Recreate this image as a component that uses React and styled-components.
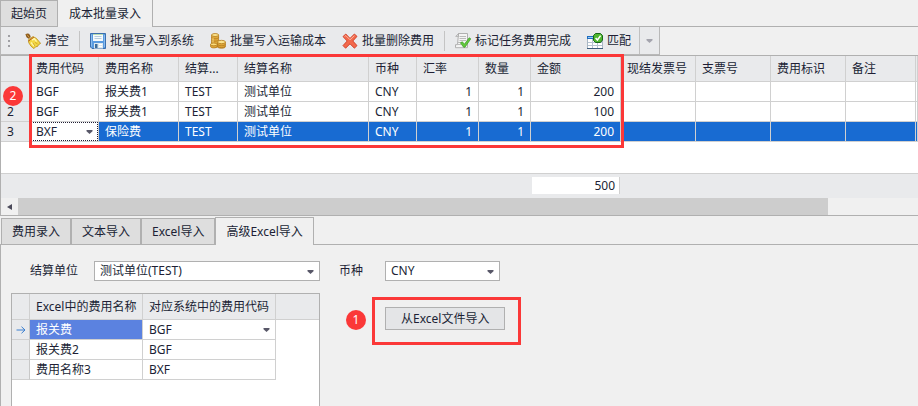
import React, {useState} from 'react'
import styled, {createGlobalStyle} from 'styled-components'

const GlobalStyle = createGlobalStyle`
  * {
    box-sizing: border-box;
  }
  body {
    margin: 0;
    background: #f0f0f0;
    color: #201f35;
    font-family: 'Noto Sans', 'Noto Sans CJK SC', sans-serif;
    font-size: 12px;
    line-height: 18px;
  }
  button,
  select {
    margin: 0;
    color: inherit;
    font: inherit;
  }
`

const Page = styled.main`
  display: flex;
  flex-direction: column;
  height: 100vh;
  overflow: hidden;
`

// tabs
const TopTabs = styled.div`
  display: flex;
  height: 27px;
  border-bottom: 1px solid #b0b0b0;
`
const TopTab = styled.button`
  padding: 0 11px;
  border: 0;
  border-right: 1px solid #b0b0b0;
  background: #f0f0f0;
  white-space: nowrap;
  ${props =>
    props.$active
      ? 'margin-bottom: -1px;'
      : `
    padding: 0 10px;
    border-left: 1px solid #b0b0b0;
    border-top: 1px solid #b0b0b0;
    background: #dedede;
  `}
`
const BottomTabs = styled.div`
  display: flex;
  align-items: flex-end;
  height: 29px;
  padding-left: 1px;
  border-bottom: 1px solid #b0b0b0;
`
const BottomTab = styled.button`
  height: ${props => (props.$active ? '28px' : '26px')};
  margin-bottom: ${props => (props.$active ? '-1px' : '0')};
  padding: 0 10px;
  border: 1px solid #b0b0b0;
  border-bottom: 0;
  background: ${props => (props.$active ? '#f0f0f0' : '#dedede')};
  white-space: nowrap;
`

// toolbar
const Toolbar = styled.div`
  display: flex;
  align-self: flex-start;
  height: 28px;
  border: 1px solid #b8b8b8;
  border-top: 0;
  background: #e9eaec;
`
const Grip = styled.span`
  display: flex;
  flex-direction: column;
  justify-content: center;
  gap: 3px;
  width: 16px;
  padding-left: 7px;
  &::before,
  &::after {
    content: '';
  }
  &::before,
  &::after,
  i {
    width: 2px;
    height: 2px;
    background: #a0a0a4;
  }
`
const ToolButton = styled.button`
  display: flex;
  align-items: center;
  gap: 4px;
  padding: 0 8px;
  border: 0;
  background: transparent;
  white-space: nowrap;
`
const Separator = styled.span`
  width: 1px;
  margin: 4px 2px 3px;
  background: #c4c4c4;
`
const MoreButton = styled.button`
  display: flex;
  align-items: center;
  justify-content: center;
  width: 20px;
  padding: 0;
  border: 0;
  border-left: 1px solid #c0c0c0;
  background: transparent;
  color: #8c8c98;
`

// tables
const GridArea = styled.section`
  position: relative;
  border-top: 1px solid #b0b0b0;
  border-left: 1px solid #b0b0b0;
  border-bottom: 1px solid #b0b0b0;
  background: #fff;
`
const Table = styled.table`
  width: 100%;
  table-layout: fixed;
  border-collapse: separate;
  border-spacing: 0;
`
const Th = styled.th`
  height: 26px;
  padding: 0 0 0 6px;
  border-right: ${props => (props.$last ? '0' : '1px solid #d0d0d0')};
  border-bottom: 1px solid #d0d0d0;
  background: #e9eaec;
  font-weight: 400;
  text-align: left;
  white-space: nowrap;
`
const Td = styled.td`
  height: 20px;
  padding: ${props => (props.$flush ? '0' : '0 6px')};
  border-right: 1px solid #d0d0d0;
  border-bottom: 1px solid #d0d0d0;
  background: ${props => props.$bg || '#fff'};
  color: ${props => (props.$bg ? '#fff' : 'inherit')};
  text-align: ${props => (props.$right ? 'right' : 'left')};
  white-space: nowrap;
`
const RowHead = styled.th`
  height: 20px;
  padding: ${props => (props.$icon ? '0' : '0 0 0 6px')};
  border-right: 1px solid #c8c8c8;
  border-bottom: 1px solid #d0d0d0;
  background: #e9eaec;
  font-weight: 400;
  text-align: left;
  svg {
    display: block;
    margin: auto;
  }
`
const Blank = styled.div`
  height: 31px;
`
const Summary = styled.div`
  border-top: 1px solid #d0d0d0;
  background: #e9eaec;
`
const SummaryCell = styled.td`
  height: 24px;
  padding: 0;
`
const Total = styled.div`
  height: 17px;
  margin: 0 1px 1px;
  padding-right: 4px;
  border-right: 1px solid #d0d0d0;
  background: #fff;
  line-height: 17px;
  text-align: right;
`

// scrollbar
const ScrollBar = styled.div`
  display: flex;
  height: 17px;
  background: #f0f0f0;
`
const ScrollArrow = styled.button`
  display: flex;
  flex: none;
  align-items: center;
  justify-content: center;
  width: 17px;
  padding: 0;
  border: 0;
  background: transparent;
`
const ScrollTrack = styled.div`
  flex: 1;
`
const ScrollThumb = styled.div`
  width: 90%;
  height: 100%;
  background: #cdcdcd;
`

// drop-downs
const SelectBox = styled.div`
  position: relative;
  flex: none;
  width: ${props => props.$width || '100%'};
  height: ${props => (props.$cell ? '19px' : '20px')};
  border: ${props => (props.$cell ? '0' : '1px solid #b0b0b0')};
  outline: ${props => (props.$focus ? '1px dotted #201f35' : '0')};
  outline-offset: -1px;
  background: #fff;
  color: #201f35;
  svg {
    position: absolute;
    top: 8px;
    right: 5px;
    pointer-events: none;
  }
`
const NativeSelect = styled.select`
  display: block;
  width: 100%;
  height: 100%;
  padding: 0 18px 0 ${props => (props.$cell ? '6px' : '5px')};
  border: 0;
  outline: 0;
  appearance: none;
  background: transparent;
  line-height: 18px;
`

// import panel
const Panel = styled.section`
  display: flex;
  flex: 1;
  min-height: 0;
  padding: 16px 0 0 10px;
  border-left: 1px solid #b0b0b0;
`
const Mapping = styled.div`
  display: flex;
  flex: none;
  flex-direction: column;
  gap: 12px;
  width: 309px;
`
const Field = styled.div`
  display: flex;
  align-items: center;
  height: 20px;
  padding-left: 19px;
`
const Label = styled.label`
  width: ${props => props.$width};
`
const MappingGrid = styled.div`
  flex: 1;
  border: 1px solid #b0b0b0;
  border-bottom: 0;
  background: #fff;
`
const ImportSide = styled.div`
  display: flex;
  flex-direction: column;
  gap: 26px;
`
const ImportAction = styled.div`
  position: relative;
  align-self: flex-start;
  margin-left: 65px;
`
const ImportButton = styled.button`
  display: block;
  height: 23px;
  padding: 0 15px;
  border: 1px solid #b0b0b0;
  background: #e4e5e7;
  line-height: 20px;
  white-space: nowrap;
`

// step highlights lying over the page
const Highlight = styled.div`
  position: absolute;
  top: ${props => props.$top};
  left: ${props => props.$left};
  width: ${props => props.$width};
  height: ${props => props.$height};
  border: 3px solid #fb3838;
  pointer-events: none;
`
const Step = styled.span`
  position: absolute;
  top: ${props => props.$top};
  left: ${props => props.$left};
  width: 20px;
  height: 20px;
  border-radius: 50%;
  background: #fb3838;
  color: #fff;
  line-height: 20px;
  text-align: center;
`

const Caret = () => (
  <svg width="7" height="4" viewBox="0 0 7 4">
    <path d="M0.5 0h6v1.2L3.5 4 0.5 1.2z" fill="currentColor" opacity="0.75" />
  </svg>
)

const BroomIcon = () => (
  <svg width="16" height="16" viewBox="0 0 16 16">
    <path d="M0.4 1.2 2.2 0.4 4 0.8 5.6 3 5.3 5 3.5 5.8 1.5 4.2z" fill="#8a5a1c" />
    <path d="M2 1.6 4.4 4.6" stroke="#d49a45" strokeWidth="1" />
    <path
      d="M3.4 6.8 8 3.6 11.4 5.4 15.6 10.4 13.4 11.8 12.6 13.4 10.6 13.8 9 15.6 6 13.2 3.8 9.8z"
      fill="#f3d743"
      stroke="#b98b16"
      strokeWidth="0.8"
    />
    <path d="M7 7 9.4 5.8 11.6 8.6M6 9.6 9 13" stroke="#fff6a8" strokeWidth="1.5" fill="none" />
    <path d="M3.6 8 8.8 4.2" stroke="#b3562b" strokeWidth="1" />
    <path d="M10 9.4 12.6 11M8 10 9.8 13" stroke="#c49a20" strokeWidth="0.7" />
  </svg>
)

const SaveIcon = () => (
  <svg width="16" height="16" viewBox="0 0 16 16">
    <path d="M0.5 0.5h15v15H2L0.5 14z" fill="#5a9be0" stroke="#3b6fae" />
    <path d="M1.5 1.5v12M14.5 2v12" stroke="#8bbdf0" />
    <rect x="3" y="1" width="10" height="7" fill="#f5fafc" />
    <path d="M3 1.5h10" stroke="#b9dcb0" />
    <path d="M4.5 3.5h7M4.5 5.5h7" stroke="#b7cddd" />
    <rect x="4" y="10" width="9" height="5.5" fill="#dfe9ee" />
    <rect x="5" y="11" width="2.5" height="4" fill="#3b6b9b" />
    <path d="M9 11.5h3M9 13.5h3" stroke="#fff" />
  </svg>
)

const CoinsIcon = () => (
  <svg width="16" height="16" viewBox="0 0 16 16" stroke="#b47b1c" strokeWidth="0.8">
    <path d="M1.6 2v10.6c0 2.6 7 2.6 7 0V2z" fill="#e0a83a" />
    <path d="M1.6 4.4c0 1.8 7 1.8 7 0M1.6 6.8c0 1.8 7 1.8 7 0M1.6 9.2c0 1.8 7 1.8 7 0" fill="none" />
    <ellipse cx="5.1" cy="2" rx="3.5" ry="1.5" fill="#fbe38c" />
    <path d="M3 5v7" stroke="#fbe08a" />
    <path d="M0.6 11.4v2c0 2 6.4 2 6.4 0v-2z" fill="#e0a83a" />
    <ellipse cx="3.8" cy="11.4" rx="3.2" ry="1.4" fill="#fbdc7c" />
    <path d="M7.6 9v4.6c0 2.2 7.8 2.2 7.8 0V9z" fill="#e0a83a" />
    <path d="M7.6 11.2c0 2 7.8 2 7.8 0M7.6 13c0 2 7.8 2 7.8 0" fill="none" />
    <ellipse cx="11.5" cy="9" rx="3.9" ry="1.7" fill="#fbe38c" />
  </svg>
)

const DeleteIcon = () => (
  <svg width="16" height="16" viewBox="0 0 16 16">
    <path
      d="M1 3.6 3.8 1 8 5.4 12.4 1 15 3.4 10.8 8 15 12.6 12.4 15.2 8 10.8 3.6 15.2 1 12.6 5.2 8z"
      fill="#f2694c"
      stroke="#cf3a22"
      strokeWidth="0.9"
    />
    <path d="M2.6 3.4 3.8 2.6 8 6.8 12.4 2.6" stroke="#ffb39b" fill="none" />
  </svg>
)

const MarkIcon = () => (
  <svg width="16" height="16" viewBox="0 0 16 16">
    <path d="M3.5 0.5h9v14.2h-12v-3h2z" fill="#f4f4f4" stroke="#b0b0b0" />
    <path d="M3.5 0.5 0.7 3.4h2.8z" fill="#ddd" stroke="#a3a3a3" strokeWidth="0.7" />
    <path d="M4.5 3.5h6.5M4.5 5.5h6.5M4.5 7.5h6.5M2 9.5h5M2 11.5h4" stroke="#bbb" />
    <path
      d="M5.4 9.8 7.4 8.8 9.4 11.2 14.2 4.8 15.8 5.8 10 14.2 8.6 14.2z"
      fill="#62c93c"
      stroke="#3a9a22"
      strokeWidth="0.7"
    />
  </svg>
)

const MatchIcon = () => (
  <svg width="16" height="16" viewBox="0 0 16 16">
    <rect x="0.5" y="3.5" width="15" height="12" fill="#fff" stroke="#a9b7c4" />
    <path d="M0 3h8v3H0z" fill="#1c6cc0" />
    <path d="M1 4h5v1H1z" fill="#9ccaf1" />
    <path d="M1 9.5h14M1 12.5h14M5.5 6v9M10.5 9v6" stroke="#b6c3d0" />
    <path d="M0 15.5h16" stroke="#3d5c7c" />
    <path d="M8.5 0.5h5L15.5 2.5v4.5L13.5 9.5h-5L6.5 7.5v-5z" fill="#50b72f" stroke="#17661a" />
    <path d="M8.6 5 10.4 7 13.6 2.6" fill="none" stroke="#fff" strokeWidth="1.5" />
  </svg>
)

const RowArrow = () => (
  <svg width="10" height="8" viewBox="0 0 10 8" fill="none" stroke="#3b7fd0">
    <path d="M0.5 4H9M5.5 0.7 9 4 5.5 7.3" />
  </svg>
)

const Dropdown = ({id, label, options, width, cell, focus}) => (
  <SelectBox $width={width} $cell={cell} $focus={focus}>
    <NativeSelect id={id} aria-label={label} $cell={cell}>
      {options.map(option => <option key={option}>{option}</option>)}
    </NativeSelect>
    <Caret />
  </SelectBox>
)

const costColumns = [
  {title: '费用代码', key: 'code', width: 69},
  {title: '费用名称', key: 'name', width: 80},
  {title: '结算...', key: 'unitCode', width: 59},
  {title: '结算名称', key: 'unitName', width: 131},
  {title: '币种', key: 'currency', width: 48},
  {title: '汇率', key: 'rate', width: 62, right: true},
  {title: '数量', key: 'count', width: 52, right: true},
  {title: '金额', key: 'amount', width: 90, right: true},
  {title: '现结发票号', key: 'invoice', width: 75},
  {title: '支票号', key: 'cheque', width: 75},
  {title: '费用标识', key: 'mark', width: 75},
  {title: '备注', key: 'remark', width: 70},
  {title: '', key: 'rest'}
]

const unit = {unitCode: 'TEST', unitName: '测试单位', currency: 'CNY', rate: 1, count: 1}
const costs = [
  {...unit, code: 'BGF', name: '报关费1', amount: 200},
  {...unit, code: 'BGF', name: '报关费1', amount: 100},
  {...unit, code: 'BXF', name: '保险费', amount: 200}
]
const total = costs.reduce((sum, row) => sum + row.amount, 0)

const mappings = [
  {name: '报关费', code: 'BGF'},
  {name: '报关费2', code: 'BGF'},
  {name: '费用名称3', code: 'BXF'}
]

const CostCols = () => (
  <colgroup>
    <col width="29" />
    {costColumns.map(column => <col key={column.key} width={column.width} />)}
  </colgroup>
)

const CostGrid = () => {
  const selected = costs.length - 1
  return (
    <GridArea>
      <Table>
        <CostCols />
        <thead>
          <tr>
            <Th />
            {costColumns.map(column => <Th key={column.key}>{column.title}</Th>)}
          </tr>
        </thead>
        <tbody>
          {costs.map((row, index) => (
            <tr key={index}>
              {/* the first number sits under the step badge */}
              <RowHead>{index > 0 && index + 1}</RowHead>
              {costColumns.map(column => {
                if (index === selected && column.key === 'code') {
                  return (
                    <Td key={column.key} $flush>
                      <Dropdown label="费用代码" options={['BXF', 'BGF']} cell focus />
                    </Td>
                  )
                }
                return (
                  <Td
                    key={column.key}
                    $right={column.right}
                    $bg={index === selected ? '#186bd2' : undefined}
                  >
                    {row[column.key]}
                  </Td>
                )
              })}
            </tr>
          ))}
        </tbody>
      </Table>
      <Blank />
      <Summary>
        <Table>
          <CostCols />
          <tbody>
            <tr>
              <SummaryCell colSpan={8} />
              <SummaryCell>
                <Total>{total}</Total>
              </SummaryCell>
              <SummaryCell colSpan={5} />
            </tr>
          </tbody>
        </Table>
      </Summary>
      <ScrollBar>
        <ScrollArrow aria-label="向左滚动">
          <svg width="5" height="6" viewBox="0 0 5 6">
            <path d="M5 0v6L0 3z" fill="#4b4a5a" />
          </svg>
        </ScrollArrow>
        <ScrollTrack>
          <ScrollThumb />
        </ScrollTrack>
      </ScrollBar>
      <Highlight $top="-2px" $left="28px" $width="595px" $height="94px" />
      <Step $top="30px" $left="2px">2</Step>
    </GridArea>
  )
}

const topTabs = ['起始页', '成本批量录入']
const bottomTabs = ['费用录入', '文本导入', 'Excel导入', '高级Excel导入']

const App = () => {
  const [topTab, setTopTab] = useState(topTabs[1])
  const [bottomTab, setBottomTab] = useState(bottomTabs[3])

  return (
    <Page>
      <GlobalStyle />
      <TopTabs role="tablist">
        {topTabs.map(tab => (
          <TopTab
            key={tab}
            role="tab"
            aria-selected={tab === topTab}
            $active={tab === topTab}
            onClick={() => setTopTab(tab)}
          >
            {tab}
          </TopTab>
        ))}
      </TopTabs>
      <Toolbar role="toolbar">
        <Grip>
          <i />
        </Grip>
        <ToolButton>
          <BroomIcon />清空
        </ToolButton>
        <Separator />
        <ToolButton>
          <SaveIcon />批量写入到系统
        </ToolButton>
        <ToolButton>
          <CoinsIcon />批量写入运输成本
        </ToolButton>
        <ToolButton>
          <DeleteIcon />批量删除费用
        </ToolButton>
        <Separator />
        <ToolButton>
          <MarkIcon />标记任务费用完成
        </ToolButton>
        <ToolButton>
          <MatchIcon />匹配
        </ToolButton>
        <MoreButton aria-label="更多">
          <Caret />
        </MoreButton>
      </Toolbar>
      <CostGrid />
      <BottomTabs role="tablist">
        {bottomTabs.map(tab => (
          <BottomTab
            key={tab}
            role="tab"
            aria-selected={tab === bottomTab}
            $active={tab === bottomTab}
            onClick={() => setBottomTab(tab)}
          >
            {tab}
          </BottomTab>
        ))}
      </BottomTabs>
      <Panel>
        <Mapping>
          <Field>
            <Label htmlFor="unit" $width="64px">结算单位</Label>
            <Dropdown id="unit" options={['测试单位(TEST)']} width="226px" />
          </Field>
          <MappingGrid>
            <Table>
              <colgroup>
                <col width="18" />
                <col width="113" />
                <col width="133" />
                <col />
              </colgroup>
              <thead>
                <tr>
                  <Th />
                  <Th>Excel中的费用名称</Th>
                  <Th>对应系统中的费用代码</Th>
                  <Th $last />
                </tr>
              </thead>
              <tbody>
                {mappings.map((row, index) => (
                  <tr key={row.name}>
                    <RowHead $icon>{index === 0 && <RowArrow />}</RowHead>
                    <Td $bg={index === 0 ? '#5b82e0' : undefined}>{row.name}</Td>
                    {index === 0 ? (
                      <Td $flush>
                        <Dropdown label="对应系统中的费用代码" options={['BGF', 'BXF']} cell />
                      </Td>
                    ) : (
                      <Td>{row.code}</Td>
                    )}
                  </tr>
                ))}
              </tbody>
            </Table>
          </MappingGrid>
        </Mapping>
        <ImportSide>
          <Field>
            <Label htmlFor="currency" $width="46px">币种</Label>
            <Dropdown id="currency" options={['CNY']} width="115px" />
          </Field>
          <ImportAction>
            <ImportButton>从Excel文件导入</ImportButton>
            <Highlight $top="-10px" $left="-13px" $width="149px" $height="48px" />
            <Step $top="3px" $left="-39px">1</Step>
          </ImportAction>
        </ImportSide>
      </Panel>
    </Page>
  )
}

export default App
